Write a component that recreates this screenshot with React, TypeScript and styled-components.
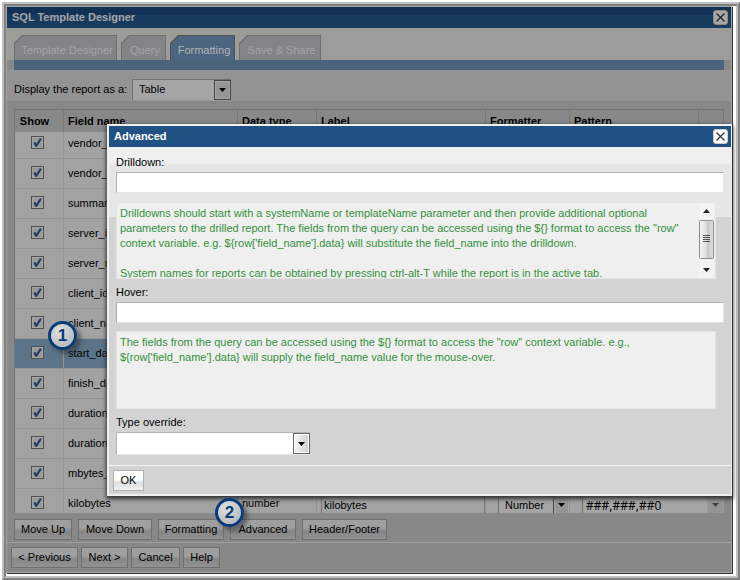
import React from 'react';
import styled, { createGlobalStyle, css } from 'styled-components';

const GlobalStyle = createGlobalStyle`
  *, *::before, *::after { box-sizing: border-box; }
  html, body, #root { height: 100%; }
  body {
    margin: 0;
    background: #fff;
    color: #000;
    font: 11px/15px "Liberation Sans", Arial, sans-serif;
  }
  button, input, select { font: inherit; color: inherit; margin: 0; border-radius: 0; }
`;

const Screen = styled.div`
  height: 100vh;
  padding: 2px 0 0 2px;
  background: #fff;
`;

const OuterFrame = styled.div`
  height: 100%;
  border-style: solid;
  border-width: 2px;
  border-color: #c0c0c0 #808080 #808080 #c0c0c0;
`;

const MiddleFrame = styled.div`
  height: 100%;
  border-style: solid;
  border-width: 2px;
  border-color: #808080 #c0c0c0 #c0c0c0 #808080;
`;

const InnerFrame = styled.div`
  height: 100%;
  padding: 0 2px 1px 0;
  border-style: solid;
  border-color: #808080 #fff #fff #808080;
  border-width: 0 2px 2px 0;
`;

const Designer = styled.main`
  position: relative;
  display: flex;
  flex-direction: column;
  height: 100%;
  border: 1px solid #a3a3a3;
  box-shadow: 1px 1px 0 #333;
  background: #888;
`;

const TitleBar = styled.header<{ $dim?: boolean }>`
  flex: none;
  display: flex;
  align-items: center;
  justify-content: space-between;
  height: 21px;
  padding: 0 3px 0 5px;
  color: ${(p) => (p.$dim ? '#a6a6a6' : '#fff')};
  background: ${(p) => (p.$dim ? 'linear-gradient(#123155 8px, #173a5f 8px)' : '#205284')};
`;

const Title = styled.h1`
  margin: 0;
  font-size: 11px;
  line-height: 15px;
  font-weight: bold;
`;

const CloseButton = styled.button<{ $dim?: boolean }>`
  display: block;
  width: 15px;
  height: 15px;
  padding: 0;
  border: 1px solid ${(p) => (p.$dim ? '#888' : '#ccc')};
  border-radius: 3px;
  background: ${(p) => (p.$dim ? '#a6a6a6' : '#fff')};
  svg { display: block; }
`;

const TabStrip = styled.nav`
  flex: none;
  display: flex;
  align-items: flex-end;
  gap: 4px;
  height: 32px;
  padding: 0 7px;
  background: #9c9c99;
`;

const cut = 'polygon(0 8px, 8px 0, 100% 0, 100% 100%, 0 100%)';

const TabEdge = styled.button<{ $active?: boolean; $w: number }>`
  width: ${(p) => p.$w}px;
  height: 25px;
  padding: 1px 1px 0;
  border: 0;
  clip-path: ${cut};
  background: ${(p) => (p.$active ? '#4a5257' : '#6d6f71')};
  color: ${(p) => (p.$active ? '#b3b3b3' : '#a2a5a8')};
`;

const TabFace = styled.span<{ $active?: boolean }>`
  display: flex;
  align-items: center;
  justify-content: center;
  height: 24px;
  padding: 5px 0 0 3px;
  white-space: nowrap;
  clip-path: ${cut};
  background: ${(p) => (p.$active ? '#4c6580' : '#828486')};
`;

const TabRule = styled.div`
  flex: none;
  height: 10px;
  margin: 0 7px;
  background: #4c637c;
`;

const TypeRow = styled.div`
  flex: none;
  display: flex;
  align-items: center;
  gap: 6px;
  height: 31px;
  padding: 8px 7px 0;
  background: #939393;
  label { width: 112px; white-space: nowrap; }
`;

const SelectBox = styled.span<{ $w: number; $h: number; $dim?: boolean }>`
  display: grid;
  grid-template-columns: 1fr 17px;
  width: ${(p) => p.$w}px;
  height: ${(p) => p.$h}px;
  border: 1px solid;
  border-color: ${(p) => (p.$dim ? '#707070 #999 #999 #707070' : '#b4b4b4 #e8e8e8 #e8e8e8 #b4b4b4')};
  border-right-width: 0;
  background: ${(p) => (p.$dim ? '#a5a5a5' : '#fff')};
`;

const Select = styled.select<{ $pattern?: boolean }>`
  grid-area: 1 / 1 / 2 / 3;
  width: 100%;
  height: 100%;
  appearance: none;
  border: 0;
  padding: ${(p) => (p.$pattern ? '0 18px 0 3px' : '0 18px 0 6px')};
  background: transparent;
  ${(p) =>
    p.$pattern &&
    css`
      font-family: "Noto Sans", "Liberation Sans", sans-serif;
      font-size: 12px;
    `}
`;

const SelectArrow = styled.span<{ $dim?: boolean; $flat?: boolean }>`
  grid-area: 1 / 2;
  display: flex;
  align-items: center;
  justify-content: center;
  pointer-events: none;
  border: 1px solid ${(p) => (p.$flat ? '#989898' : p.$dim ? '#444' : '#666')};
  background: ${(p) => (p.$dim ? '#959595' : 'linear-gradient(90deg, #f6f6f6, #d0d0d0)')};
  box-shadow: inset 0 0 0 1px ${(p) => (p.$flat ? '#999' : p.$dim ? '#a5a5a5' : '#fff')};
`;

const GridArea = styled.section`
  flex: 1;
  min-height: 0;
  overflow: hidden;
  margin: 8px 7px 0;
  border: 1px solid #737373;
  border-bottom: 0;
  border-right: 0;
`;

const Table = styled.table`
  width: 100%;
  table-layout: fixed;
  border-collapse: separate;
  border-spacing: 0;
`;

const HeadCell = styled.th<{ $center?: boolean }>`
  height: 22px;
  padding: 0 0 0 4px;
  border-right: 1px solid #777;
  background: #888;
  font-weight: bold;
  text-align: ${(p) => (p.$center ? 'center' : 'left')};
  white-space: nowrap;
  &:first-child { padding: 0 9px 0 0; }
`;

const Row = styled.tr<{ $selected?: boolean; $first?: boolean }>`
  height: ${(p) => (p.$first ? 27 : 30)}px;
  background: ${(p) => (p.$selected ? '#5c7489' : '#a2a2a2')};
`;

const cellPadding = {
  text: '0 0 7px 4px',
  check: '0 3px 9px 0',
  field: '0 0 2px 4px',
  picker: '0 0 2px 12px',
};

const Cell = styled.td<{ $kind?: keyof typeof cellPadding }>`
  padding: ${(p) => cellPadding[p.$kind ?? 'text']};
  border-right: 1px solid #949494;
  border-bottom: 1px solid #949494;
  vertical-align: bottom;
  white-space: nowrap;
  overflow: hidden;
  &:last-child { border-right: 0; }
`;

const CheckBox = styled.input`
  display: block;
  appearance: none;
  width: 13px;
  height: 13px;
  margin: 0 auto;
  border: 1px solid #4f4f4f;
  background: #999
    url("data:image/svg+xml,%3Csvg xmlns='http://www.w3.org/2000/svg' viewBox='0 0 11 11'%3E%3Cpath d='M2.2 5.4 4.3 8.8 8.9 1.6' fill='none' stroke='%23233767' stroke-width='2'/%3E%3C/svg%3E")
    center / 11px 11px;
  box-shadow: inset 0 0 0 1px #a5a5a5;
`;

const CellInput = styled.input`
  display: block;
  width: 100%;
  height: 22px;
  padding: 0 2px;
  border: 1px solid #777;
  background: #a2a2a2;
`;

const ButtonBar = styled.div<{ $nav?: boolean }>`
  flex: none;
  display: flex;
  gap: ${(p) => (p.$nav ? 3 : 6)}px;
  padding: ${(p) => (p.$nav ? '4px' : '6px 7px 2px')};
  ${(p) =>
    p.$nav &&
    css`
      border-top: 1px solid #a2a2a2;
    `}
`;

const PushButton = styled.button<{ $dim?: boolean; $w: number }>`
  width: ${(p) => p.$w}px;
  height: 21px;
  padding: 0;
  border: 1px solid ${(p) => (p.$dim ? '#6f6f6f' : '#b0b0b0')};
  white-space: nowrap;
  background: ${(p) =>
    p.$dim
      ? 'linear-gradient(#9f9f9f 40%, #868686 60%, #929292)'
      : 'linear-gradient(#fff 45%, #e0e0e0 60%, #efefef)'};
`;

const Dialog = styled.section`
  position: absolute;
  top: 117px;
  right: -1px;
  left: 100px;
  border: 2px solid #f0f0f0;
  border-right-width: 1px;
  box-shadow: 0 2px 4px 1px #333;
  background: linear-gradient(#efefef 38px, #e6e6e6 38px, #e6e6e6 91px, #d3d3d3 91px);
`;

const DialogBody = styled.div`
  display: flex;
  flex-direction: column;
  padding: 8px 7px 10px;
`;

const FieldLabel = styled.label`
  height: 15px;
  margin-bottom: 2px;
`;

const TextField = styled.input`
  width: 100%;
  height: 21px;
  padding: 0 4px;
  border: 1px solid;
  border-color: #b0b0b0 #e4e4e4 #e4e4e4 #b0b0b0;
  background: #fff;
`;

const HelpPanel = styled.div<{ $scroll?: boolean }>`
  display: flex;
  justify-content: space-between;
  height: ${(p) => (p.$scroll ? 77 : 78)}px;
  margin: ${(p) => (p.$scroll ? '9px 8px 6px 0' : '8px 8px 6px 0')};
  padding: ${(p) => (p.$scroll ? '0 1px 0 0' : '0')};
  border: 1px solid #e4e4e4;
  overflow: hidden;
  background: #efefef;
  color: #32913b;
`;

const HelpText = styled.p`
  margin: 0;
  padding: 3px;
  white-space: pre;
`;

const ScrollTrack = styled.div`
  flex: none;
  width: 15px;
  height: 75px;
  background: #f3f3f3;
`;

const Separator = styled.hr`
  height: 1px;
  margin: 0;
  border: 0;
  background: #f2f2f2;
`;

const DialogFooter = styled.footer`
  padding: 4px 4px 3px;
`;

const Callout = styled.span<{ $x: number; $y: number }>`
  position: absolute;
  left: ${(p) => p.$x}px;
  top: ${(p) => p.$y}px;
  display: flex;
  align-items: center;
  justify-content: center;
  width: 29px;
  height: 29px;
  border: 3px solid #073c7c;
  border-radius: 50%;
  background: radial-gradient(circle at 35% 30%, #e0e0e0, #b0b0b0);
  box-shadow: 4px 4px 4px rgba(50, 50, 50, 0.55);
  color: #073c7c;
  font-size: 17px;
  line-height: 17px;
  font-weight: bold;
`;

const Cross = ({ color = '#333' }: { color?: string }) => (
  <svg width="13" height="13" viewBox="0 0 13 13" aria-hidden="true">
    <path d="M2.5 2.5 10.5 10.5M10.5 2.5 2.5 10.5" stroke={color} strokeWidth="1.2" fill="none" />
  </svg>
);

const Arrow = ({ color = '#000' }: { color?: string }) => (
  <svg width="7" height="4" viewBox="0 0 7 4" aria-hidden="true">
    <path d="M0 0H7L3.5 4Z" fill={color} />
  </svg>
);

const tabs = [
  { label: 'Template Designer', w: 103 },
  { label: 'Query', w: 45 },
  { label: 'Formatting', w: 65, active: true },
  { label: 'Save & Share', w: 82 },
];

const fields = [
  { name: 'vendor_id' },
  { name: 'vendor_nm' },
  { name: 'summary' },
  { name: 'server_id' },
  { name: 'server_nm' },
  { name: 'client_id' },
  { name: 'client_na' },
  { name: 'start_date', selected: true },
  { name: 'finish_date' },
  { name: 'duration' },
  { name: 'duration_s' },
  { name: 'mbytes_in' },
  { name: 'kilobytes', type: 'number', format: 'Number', pattern: '###,###,##0' },
];

const rowActions = [
  { label: 'Move Up', w: 58 },
  { label: 'Move Down', w: 74 },
  { label: 'Formatting', w: 66 },
  { label: 'Advanced', w: 66 },
  { label: 'Header/Footer', w: 85 },
];

const navActions = [
  { label: '< Previous', w: 67 },
  { label: 'Next >', w: 47 },
  { label: 'Cancel', w: 49 },
  { label: 'Help', w: 37 },
];

const drilldownHelp = `Drilldowns should start with a systemName or templateName parameter and then provide additional optional
parameters to the drilled report. The fields from the query can be accessed using the \${} format to access the "row"
context variable. e.g. \${row['field_name'].data} will substitute the field_name into the drilldown.

System names for reports can be obtained by pressing ctrl-alt-T while the report is in the active tab.`;

const hoverHelp = `The fields from the query can be accessed using the \${} format to access the "row" context variable. e.g.,
\${row['field_name'].data} will supply the field_name value for the mouse-over.`;

function FieldTable() {
  return (
    <GridArea>
      <Table>
        <colgroup>
          <col style={{ width: 49 }} />
          <col style={{ width: 174 }} />
          <col style={{ width: 79 }} />
          <col />
          <col style={{ width: 84 }} />
          <col style={{ width: 129 }} />
          <col style={{ width: 25 }} />
        </colgroup>
        <thead>
          <tr>
            <HeadCell $center>Show</HeadCell>
            <HeadCell>Field name</HeadCell>
            <HeadCell>Data type</HeadCell>
            <HeadCell>Label</HeadCell>
            <HeadCell>Formatter</HeadCell>
            <HeadCell>Pattern</HeadCell>
            <HeadCell />
          </tr>
        </thead>
        <tbody>
          {fields.map((f, i) => (
            <Row key={f.name} $selected={f.selected} $first={i === 0}>
              <Cell $kind="check">
                <CheckBox type="checkbox" defaultChecked aria-label={`Show ${f.name}`} />
              </Cell>
              <Cell>{f.name}</Cell>
              <Cell>{f.type}</Cell>
              <Cell $kind="field">{f.type && <CellInput aria-label="Label" defaultValue={f.name} />}</Cell>
              <Cell $kind="picker">
                {f.format && (
                  <SelectBox $w={72} $h={22} $dim>
                    <Select aria-label="Formatter">
                      <option>{f.format}</option>
                    </Select>
                    <SelectArrow $dim>
                      <Arrow />
                    </SelectArrow>
                  </SelectBox>
                )}
              </Cell>
              <Cell $kind="picker" colSpan={2}>
                {f.pattern && (
                  <SelectBox $w={142} $h={22} $dim>
                    <Select aria-label="Pattern" $pattern>
                      <option>{f.pattern}</option>
                    </Select>
                    <SelectArrow $dim $flat>
                      <Arrow color="#444" />
                    </SelectArrow>
                  </SelectBox>
                )}
              </Cell>
            </Row>
          ))}
        </tbody>
      </Table>
    </GridArea>
  );
}

function AdvancedDialog() {
  return (
    <Dialog role="dialog" aria-label="Advanced">
      <TitleBar>
        <Title as="h2">Advanced</Title>
        <CloseButton aria-label="Close dialog">
          <Cross />
        </CloseButton>
      </TitleBar>
      <DialogBody>
        <FieldLabel htmlFor="drilldown">Drilldown:</FieldLabel>
        <TextField id="drilldown" />
        <HelpPanel $scroll>
          <HelpText>{drilldownHelp}</HelpText>
          <ScrollTrack>
            <svg width="15" height="75" viewBox="0 0 15 75" aria-hidden="true">
              <defs>
                <linearGradient id="thumb">
                  <stop offset="0" stopColor="#f8f8f8" />
                  <stop offset="0.5" stopColor="#dcdcdc" />
                  <stop offset="0.55" stopColor="#c6c6c6" />
                  <stop offset="1" stopColor="#dedede" />
                </linearGradient>
              </defs>
              <path d="M4 10 7.5 6 11 10ZM4 65H11L7.5 69Z" fill="#222" />
              <rect x="0.5" y="17.5" width="14" height="38" rx="1" fill="url(#thumb)" stroke="#8e8e8e" />
              <path d="M4 32.5H11M4 34.5H11M4 36.5H11M4 38.5H11" stroke="#555" />
            </svg>
          </ScrollTrack>
        </HelpPanel>
        <FieldLabel htmlFor="hover">Hover:</FieldLabel>
        <TextField id="hover" />
        <HelpPanel>
          <HelpText>{hoverHelp}</HelpText>
        </HelpPanel>
        <FieldLabel htmlFor="override">Type override:</FieldLabel>
        <SelectBox $w={194} $h={23}>
          <Select id="override">
            <option></option>
          </Select>
          <SelectArrow>
            <Arrow />
          </SelectArrow>
        </SelectBox>
      </DialogBody>
      <Separator />
      <DialogFooter>
        <PushButton $w={31}>OK</PushButton>
      </DialogFooter>
    </Dialog>
  );
}

export default function App() {
  return (
    <Screen>
      <GlobalStyle />
      <OuterFrame>
        <MiddleFrame>
          <InnerFrame>
            <Designer>
              <TitleBar $dim>
                <Title>SQL Template Designer</Title>
                <CloseButton $dim aria-label="Close designer">
                  <Cross color="#222" />
                </CloseButton>
              </TitleBar>
              <TabStrip>
                {tabs.map((t) => (
                  <TabEdge key={t.label} $active={t.active} $w={t.w}>
                    <TabFace $active={t.active}>{t.label}</TabFace>
                  </TabEdge>
                ))}
              </TabStrip>
              <TabRule />
              <TypeRow>
                <label htmlFor="display">Display the report as a:</label>
                <SelectBox $w={99} $h={22} $dim>
                  <Select id="display">
                    <option>Table</option>
                  </Select>
                  <SelectArrow $dim>
                    <Arrow />
                  </SelectArrow>
                </SelectBox>
              </TypeRow>
              <FieldTable />
              <ButtonBar>
                {rowActions.map((b) => (
                  <PushButton key={b.label} $dim $w={b.w}>
                    {b.label}
                  </PushButton>
                ))}
              </ButtonBar>
              <ButtonBar $nav>
                {navActions.map((b) => (
                  <PushButton key={b.label} $dim $w={b.w}>
                    {b.label}
                  </PushButton>
                ))}
              </ButtonBar>
              <AdvancedDialog />
              <Callout $x={41} $y={314}>1</Callout>
              <Callout $x={208} $y={491}>2</Callout>
            </Designer>
          </InnerFrame>
        </MiddleFrame>
      </OuterFrame>
    </Screen>
  );
}
